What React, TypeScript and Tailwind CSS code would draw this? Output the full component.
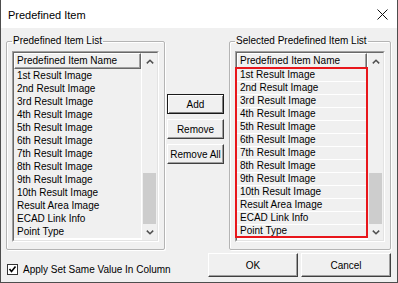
const items = [
  '1st Result Image',
  '2nd Result Image',
  '3rd Result Image',
  '4th Result Image',
  '5th Result Image',
  '6th Result Image',
  '7th Result Image',
  '8th Result Image',
  '9th Result Image',
  '10th Result Image',
  'Result Area Image',
  'ECAD Link Info',
  'Point Type',
];

function Chevron({ down }: { down?: boolean }) {
  return (
    <svg width="8" height="5" viewBox="0 0 8 5" className={down ? 'rotate-180' : ''}>
      <polyline points="0.8,4.4 4,1.2 7.2,4.4" fill="none" stroke="#505050" strokeWidth="1.5" />
    </svg>
  );
}

function ScrollBar() {
  return (
    <div className="w-[16px] flex flex-col bg-[#f0f0f0] border-l border-white">
      <div className="h-[16px] flex items-center justify-center">
        <Chevron />
      </div>
      <div className="flex-1 flex flex-col justify-end">
        <div className="h-[51px] mx-[1px] bg-[#cdcdcd]" />
      </div>
      <div className="h-[16px] flex items-center justify-center">
        <Chevron down />
      </div>
    </div>
  );
}

function ItemList({ gridLines, marked }: { gridLines?: boolean; marked?: boolean }) {
  return (
    <div className="relative w-full h-[191px] border border-t-[#a0a0a0] border-l-[#a0a0a0] border-b-white border-r-white">
      <div className="h-full flex border border-t-[#696969] border-l-[#696969] border-b-[#e3e3e3] border-r-[#e3e3e3] bg-white">
        <div className="flex-1 flex flex-col">
          <div className="h-[16px] pl-[2px] leading-[14px] bg-[#f0f0f0] border border-t-white border-l-white border-b-[#696969] border-r-[#696969] shadow-[inset_-1px_-1px_0_#a0a0a0]">
            Predefined Item Name
          </div>
          {items.map((t) => (
            <div
              key={t}
              className={
                gridLines
                  ? 'h-[13px] leading-[12px] pl-[3px] bg-[#f0f0f0] border-b border-white'
                  : 'h-[13px] leading-[13px] pl-[3px] bg-[#f0f0f0]'
              }
            >
              {t}
            </div>
          ))}
          <div className="flex-1 bg-white" />
        </div>
        <ScrollBar />
      </div>
      {marked && (
        <div className="absolute left-[-1px] top-[15px] w-[133px] h-[171px] border-2 border-[#e8161b]" />
      )}
    </div>
  );
}

function GroupBox({ title, width, children }: { title: string; width: string; children: React.ReactNode }) {
  return (
    <fieldset
      className={`${width} h-[215px] px-[5px] border border-[#b4b4b4] rounded-[2px] shadow-[inset_1px_1px_0_#fff,1px_1px_0_#fff]`}
    >
      <legend className="px-[1px] leading-[12px]">{title}</legend>
      <div className="mt-[4px]">{children}</div>
    </fieldset>
  );
}

function Btn({ label, def, className }: { label: string; def?: boolean; className: string }) {
  return (
    <div
      className={
        def
          ? `${className} flex items-center justify-center bg-[#f0f0f0] border border-[#1a1a1a] shadow-[inset_1px_1px_0_#fff,inset_-1px_-1px_0_#808080]`
          : `${className} flex items-center justify-center bg-[#f0f0f0] border border-t-white border-l-white border-b-[#404040] border-r-[#404040] shadow-[inset_-1px_-1px_0_#a0a0a0]`
      }
    >
      {label}
    </div>
  );
}

export default function App() {
  return (
    <div className="w-[398px] h-[283px] bg-[#f0f0f0] border-x border-b border-[#4d4d4d] flex flex-col overflow-hidden text-[10px] text-black font-['Liberation_Sans',Arial,sans-serif]">
      <div className="h-[28px] bg-white flex items-center justify-between pl-[7px] pr-[9px]">
        <span className="text-[11px] mt-[2px]">Predefined Item</span>
        <svg width="11" height="11" viewBox="0 0 11 11">
          <path d="M0.5 0.5 L10.5 10.5 M10.5 0.5 L0.5 10.5" stroke="#111" strokeWidth="1" />
        </svg>
      </div>

      <div className="flex items-start pt-[7px] pl-[5px]">
        <GroupBox title="Predefined Item List" width="w-[159px]">
          <ItemList />
        </GroupBox>

        <div className="ml-[2px] mt-[59px] flex flex-col gap-[5px]">
          <Btn label="Add" def className="w-[57px] h-[20px]" />
          <Btn label="Remove" className="w-[57px] h-[20px]" />
          <Btn label="Remove All" className="w-[57px] h-[20px]" />
        </div>

        <div className="ml-[5px]">
          <GroupBox title="Selected Predefined Item List" width="w-[162px]">
            <ItemList gridLines marked />
          </GroupBox>
        </div>
      </div>

      <div className="flex items-start pt-[3px] pl-[6px] pr-[6px]">
        <div className="flex items-center mt-[9px] gap-[5px]">
          <div className="w-[11px] h-[11px] bg-white border border-[#333] flex items-center justify-center">
            <svg width="9" height="9" viewBox="0 0 9 9">
              <polyline points="1.5,4 3.5,6.5 7.5,1.5" fill="none" stroke="#000" strokeWidth="1.6" />
            </svg>
          </div>
          <span>Apply Set Same Value In Column</span>
        </div>
        <div className="ml-auto flex gap-[3px]">
          <Btn label="OK" className="w-[90px] h-[24px]" />
          <Btn label="Cancel" className="w-[90px] h-[24px]" />
        </div>
      </div>
    </div>
  );
}
